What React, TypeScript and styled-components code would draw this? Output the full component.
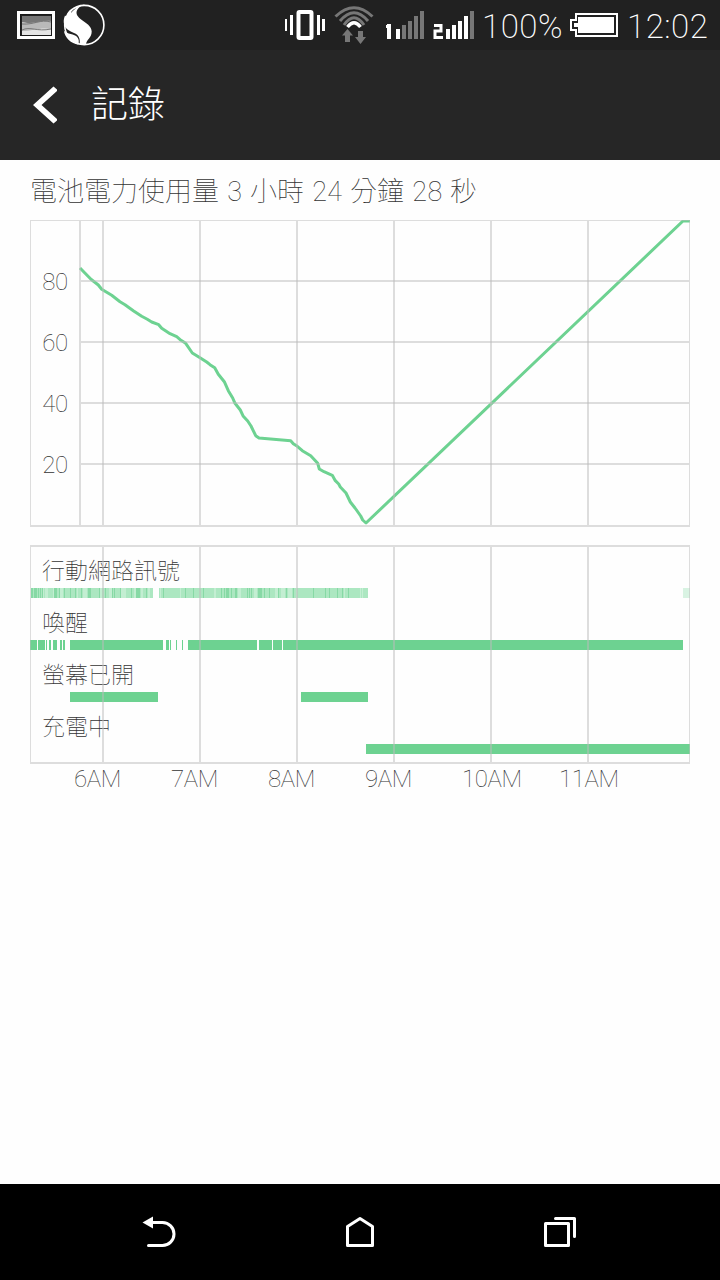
import React from "react";
import styled, { createGlobalStyle } from "styled-components";

const Global = createGlobalStyle`
  * { box-sizing: border-box; }
  html, body { margin: 0; padding: 0; }
  body {
    background: #fefefe;
    font-family: Roboto, "Noto Sans CJK TC", sans-serif;
    font-weight: 100;
  }
  svg { display: block; flex: none; }
`;

const Screen = styled.div`
  width: 720px;
  height: 1280px;
  display: flex;
  flex-direction: column;
  overflow: hidden;
`;

const StatusBar = styled.header`
  height: 50px;
  flex: none;
  display: flex;
  align-items: flex-start;
  background: #212121;
  color: #fff;
`;

const StatusText = styled.span<{ $left: number; $width: number }>`
  margin-left: ${(p) => p.$left}px;
  width: ${(p) => p.$width}px;
  letter-spacing: 0.5px;
  font-size: 33px;
  font-weight: 200;
  line-height: 54px;
  white-space: nowrap;
`;

const TitleBar = styled.div`
  height: 110px;
  flex: none;
  display: flex;
  align-items: center;
  padding-left: 33px;
  gap: 33px;
  background: #262626;
  color: #fff;
`;

const Title = styled.h1`
  margin: 2px 0 0;
  font-size: 37px;
  line-height: 44px;
  font-weight: 300;
`;

const Content = styled.main`
  flex: 1;
  padding: 0 30px;
  color: #333;
`;

const Summary = styled.p`
  margin: 0;
  height: 60px;
  font-size: 27px;
  line-height: 64px;
  word-spacing: 1px;
  white-space: nowrap;
`;

const Amount = styled.span`
  margin-left: 0.8px;
  letter-spacing: 0.4px;
`;

const Layers = styled.section<{ $height: number; $gap?: number }>`
  display: grid;
  width: 660px;
  height: ${(p) => p.$height}px;
  margin-top: ${(p) => p.$gap ?? 0}px;
  & > * { grid-area: 1 / 1; }
`;

const LevelAxis = styled.div`
  width: 38px;
  padding-top: 32px;
  display: flex;
  flex-direction: column;
  text-align: right;
  font-size: 24px;
  letter-spacing: -0.2px;
`;

const LevelLabel = styled.span`
  height: 61px;
  line-height: 61px;
`;

const Rows = styled.div`
  display: flex;
  flex-direction: column;
`;

const Row = styled.div`
  height: 52px;
`;

const RowLabel = styled.div`
  height: 43px;
  padding: 3px 0 0 12px;
  font-size: 23px;
  line-height: 47px;
`;

const HourAxis = styled.div`
  display: flex;
  margin-left: 44px;
`;

const HourLabel = styled.span`
  width: 97px;
  flex: none;
  font-size: 24px;
  line-height: 31px;
  letter-spacing: -0.4px;
`;

const NavBar = styled.nav`
  height: 96px;
  flex: none;
  display: flex;
  justify-content: center;
  align-items: center;
  gap: 160px;
  background: #000;
`;

const GREEN = "#6dd291";
const GRID = "rgba(187,187,187,.5)";
const HOURS = [73, 170, 267, 364, 461, 558];

const LEVELS =
  "50,48 61,59.3 68.3,65 71.7,69.3 81.7,75.3 90,81.7 95,84.7 103.3,90.7 111.7,96.3 117.3,99.3 121.7,102 128.7,104.7 131.7,108.3 140,113.7 146.7,116.7 151,120.3 155.7,123.3 162.3,133 170,137.7 176.7,142 180,144.7 184.7,147.7 188.3,154.3 194.3,161.7 198.3,170.7 202.7,178 205,183.3 210.3,190 213.3,196.3 217.7,201 221,206 225.7,215.7 229,218 260.7,220.7 263.3,223.7 267.3,226.3 272.3,230.7 280.7,235.7 287.7,243.3 289.3,249 294,251.7 302.3,255.3 305.3,260.7 308.7,264 310.3,267 316,273 320.3,282 325,288 330.7,296 332.7,300 336,303 653,1 660,1";

type Bar = [from: number, to: number, color?: string];

const BASE = "#ace7c1";
const DARK = "#87d9a5";
const PALE = "#c3eed2";
const stripes = (color: string, list: [number, number][]): Bar[] =>
  list.map(([x, w]) => [x, x + w, color]);

const SIGNAL: Bar[] = [
  [1, 123, BASE],
  [129, 338, BASE],
  [653, 660, "#d9f3e3"],
  ...stripes(PALE, [
    [13, 1], [15, 3], [23, 2], [30, 3], [47, 1], [53, 4], [70, 2], [79, 4], [91, 5],
    [104, 2], [111, 2], [118, 2], [130, 1], [150, 1], [184, 2], [208, 3], [224, 3], [245, 3],
    [251, 4], [258, 4], [266, 1], [314, 1], [330, 1], [332, 1],
  ]),
  ...stripes(DARK, [
    [1, 2], [4, 3], [8, 1], [10, 1], [12, 1], [24, 3], [29, 1], [34, 1], [40, 1], [45, 1],
    [51, 1], [58, 3], [69, 1], [75, 1], [82, 1], [84, 1], [90, 1], [101, 1], [106, 4],
    [116, 1], [133, 1], [155, 1], [163, 1], [173, 1], [191, 1], [194, 1], [196, 3], [201, 1],
    [205, 2], [217, 1], [219, 1], [221, 1], [228, 4], [234, 1], [239, 1], [248, 1],
    [256, 1], [263, 1], [283, 1], [295, 1], [299, 1], [307, 1], [312, 1], [318, 1],
  ]),
];

const AWAKE: Bar[] = [
  [0, 7], [8, 15], [16, 17], [19, 21], [23, 27], [30, 32], [33, 35], [40, 133], [136, 139],
  [140, 141], [146, 147], [152, 153], [158, 227], [229, 242], [243, 252], [253, 653],
];

const TRACKS: { label: string; bars: Bar[] }[] = [
  { label: "行動網路訊號", bars: SIGNAL },
  { label: "喚醒", bars: AWAKE },
  { label: "螢幕已開", bars: [[40, 128], [271, 338]] },
  { label: "充電中", bars: [[336, 660]] },
];

function Track({ bars }: { bars: Bar[] }) {
  return (
    <svg width="660" height="10" shapeRendering="crispEdges">
      {bars.map(([from, to, color], i) => (
        <rect key={i} x={from} width={to - from} height="10" fill={color ?? GREEN} />
      ))}
    </svg>
  );
}

function StatusIcons() {
  return (
    <svg width="475" height="50" viewBox="0 0 475 50" fill="none">
      <rect x="18.5" y="12.5" width="35" height="25" stroke="#fff" strokeWidth="3" />
      <path d="M22 16h29v19H22z" fill="#e4e4e4" />
      <path d="M22 16h29v5c-8 0-14 5-29 1z" fill="#777" />
      <path d="M22 22c12 3 18-2 29-1v8c-11-2-18 2-29 2z" fill="#b9b9b9" />
      <path d="M22 19c9-2 14 3 29 0M22 24c12 1 18-5 29-2M22 30c8-4 15 2 29-1" stroke="#777" />
      <rect x="20.5" y="14.5" width="31" height="21" stroke="#191919" />
      <circle cx="84.300" cy="25" r="19.600" stroke="#fff" strokeWidth="1.600" />
      <path
        d="M85 4.500C80 5 75 8 71 13L72 8.500C68 11 66.500 14 67 17L65 15.500C63.500 19 63.500 22 64 24C64.500 28 68 30 74 33C79 35 80.500 39 79.500 44.500C82 45.500 84 45 86 44.500C86 40 91.700 38 91.700 31.500C91.700 23 77 20 76.500 13C76.500 9 80 6 85 4.500ZM63.800 30.500C65 38 71 43.500 78.500 44.800C79 41 79 39.500 77.500 37.500C74.500 33 67 35 63.800 30.500Z"
        fill="#fff"
      />
      <path d="M285 19h2v12h-2zM290 15h3v20h-3zM317 15h3v20h-3zM322 19h3v12h-3z" fill="#fff" />
      <rect x="298.500" y="12" width="13" height="26" rx="1" stroke="#fff" strokeWidth="4" />
      <g stroke="#777" strokeWidth="3">
        <path d="M335.500 16.500Q354 -1 372.500 16.500" />
        <path d="M340 21Q354 4.500 368 21" />
        <path d="M344 25Q354 10.500 364 25" />
      </g>
      <path d="M347.500 27Q354 18.500 360.500 27" stroke="#fff" strokeWidth="3.500" />
      <path d="M347.500 29l5.500 6.500h-3V42h-5v-6.500h-3zM360.500 44l-5.500-7h3v-6h5v6h3z" fill="#777" />
      <path d="M387 24h4v15h-4V28h-1v-3h1z" fill="#fff" />
      <path d="M396 29h4v10h-4z" fill="#fff" />
      <path d="M402 25h4v14h-4zM408 21h4v18h-4zM414 16h4v23h-4zM420 11h4v28h-4z" fill="#777" />
      <path d="M434 25.500h7v5.500h-6v6.500h8" stroke="#fff" strokeWidth="3" />
      <path d="M446 29h4v10h-4zM452 25h4v14h-4zM458 21h4v18h-4zM464 16h4v23h-4z" fill="#fff" />
      <path d="M470 11h4v28h-4z" fill="#777" />
    </svg>
  );
}

function BatteryIcon() {
  return (
    <svg width="50" height="50" viewBox="0 0 50 50">
      <path d="M6 14H47V36H6V30H1V20H6Z" fill="none" stroke="#fff" strokeWidth="2" />
      <path d="M8 17H44V33H8V27H4V23H8Z" fill="#fff" />
    </svg>
  );
}

function NavIcon({ children }: { children: React.ReactNode }) {
  return (
    <svg width="40" height="40" viewBox="0 0 40 40" fill="none" stroke="#fff" strokeWidth="3" strokeLinecap="round" strokeLinejoin="round">
      {children}
    </svg>
  );
}

export default function App() {
  return (
    <Screen>
      <Global />
      <StatusBar>
        <StatusIcons />
        <StatusText $left={7} $width={80}>100%</StatusText>
        <svg width="8" height="50" />
        <BatteryIcon />
        <StatusText $left={7} $width={84}>12:02</StatusText>
      </StatusBar>
      <TitleBar>
        <svg width="25" height="38" viewBox="0 0 25 38">
          <path d="M20.500 0.500L24 3.500V5L8.500 19L24 33V34.500L20.500 37.500L0 19Z" fill="#fff" />
        </svg>
        <Title>記錄</Title>
      </TitleBar>
      <Content>
        <Summary>
          電池電力使用量 <Amount>3</Amount> 小時 <Amount>24</Amount> 分鐘 <Amount>28</Amount> 秒
        </Summary>
        <Layers $height={307}>
          <LevelAxis>
            {[80, 60, 40, 20].map((n) => (
              <LevelLabel key={n}>{n}</LevelLabel>
            ))}
          </LevelAxis>
          <svg width="660" height="307">
            <polyline points={LEVELS} fill="none" stroke={GREEN} strokeWidth="3" strokeLinejoin="round" />
            <g fill={GRID} shapeRendering="crispEdges">
              <rect width="660" height="1" />
              <rect y="305" width="660" height="2" />
              <rect y="1" width="1" height="304" />
              <rect x="659" y="1" width="1" height="304" />
              {[50, ...HOURS].map((x) => (
                <rect key={x} x={x - 1} y="1" width="2" height="304" />
              ))}
              {[61, 122, 183, 244].map((y) => (
                <rect key={y} x="51" y={y - 1} width="608" height="2" />
              ))}
            </g>
          </svg>
        </Layers>
        <Layers $height={219} $gap={18}>
          <Rows>
            {TRACKS.map((t) => (
              <Row key={t.label}>
                <RowLabel>{t.label}</RowLabel>
                <Track bars={t.bars} />
              </Row>
            ))}
          </Rows>
          <svg width="660" height="219">
            <g fill={GRID} shapeRendering="crispEdges">
              <rect width="660" height="2" />
              <rect y="217" width="660" height="2" />
              <rect y="2" width="1" height="215" />
              <rect x="659" y="2" width="1" height="215" />
              {HOURS.map((x) => (
                <rect key={x} x={x - 1} y="2" width="2" height="215" />
              ))}
            </g>
          </svg>
        </Layers>
        <HourAxis>
          {["6AM", "7AM", "8AM", "9AM", "10AM", "11AM"].map((h) => (
            <HourLabel key={h}>{h}</HourLabel>
          ))}
        </HourAxis>
      </Content>
      <NavBar>
        <NavIcon>
          <path d="M10 10.500h12.500a11.500 11.500 0 0 1 0 23H8.500" />
          <path d="M2.500 10.500L13 4.500V16.500Z" fill="#fff" stroke="none" />
        </NavIcon>
        <NavIcon>
          <path d="M7.500 33.500V14.500L20 6.500L32.500 14.500V33.500Z" />
        </NavIcon>
        <NavIcon>
          <path d="M5.500 11.500H28.500V33.500H5.500ZM15.500 6.500H34.500V24.500" />
        </NavIcon>
      </NavBar>
    </Screen>
  );
}
